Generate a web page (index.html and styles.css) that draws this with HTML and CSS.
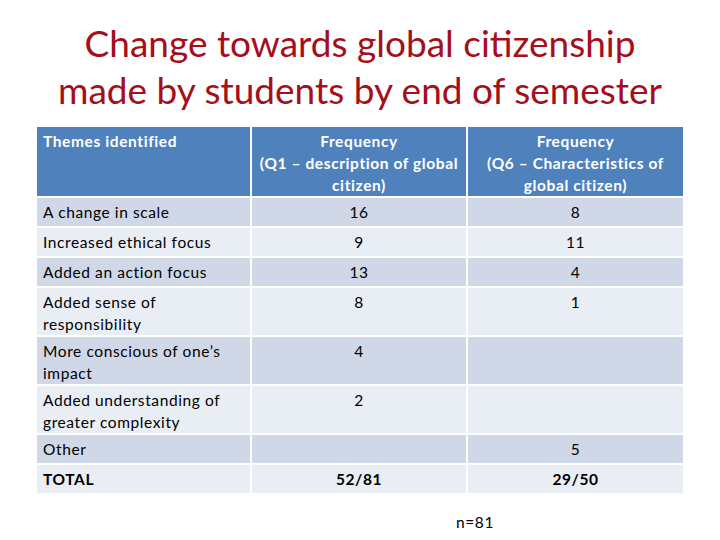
FILE: index.html
```html
<!DOCTYPE html>
<html>
<head>
<meta charset="utf-8">
<link rel="stylesheet" href="styles.css">
</head>
<body>
<div class="slide">
  <h1 class="title">Change towards global citizenship<br>made by students by end of semester</h1>
  <table class="data">
    <colgroup><col class="c1"><col class="c2"><col class="c3"></colgroup>
    <thead>
      <tr>
        <th class="left">Themes identified</th>
        <th>Frequency<br>(Q1 – description of global citizen)</th>
        <th>Frequency<br>(Q6 – Characteristics of global citizen)</th>
      </tr>
    </thead>
    <tbody>
      <tr class="dark"><td class="left">A change in scale</td><td>16</td><td>8</td></tr>
      <tr class="light"><td class="left">Increased ethical focus</td><td>9</td><td>11</td></tr>
      <tr class="dark"><td class="left">Added an action focus</td><td>13</td><td>4</td></tr>
      <tr class="light"><td class="left">Added sense of responsibility</td><td>8</td><td>1</td></tr>
      <tr class="dark"><td class="left">More conscious of one’s impact</td><td>4</td><td></td></tr>
      <tr class="light"><td class="left">Added understanding of greater complexity</td><td>2</td><td></td></tr>
      <tr class="dark"><td class="left">Other</td><td></td><td>5</td></tr>
      <tr class="light total"><td class="left">TOTAL</td><td>52/81</td><td>29/50</td></tr>
    </tbody>
  </table>
  <div class="note">n=81</div>
</div>
</body>
</html>
```
FILE: styles.css
```css
html, body {
  margin: 0;
  padding: 0;
  background: #ffffff;
}
.slide {
  width: 720px;
  height: 540px;
  display: flex;
  flex-direction: column;
  align-items: center;
  font-family: Lato, "Open Sans", sans-serif;
}
.title {
  margin: 19px 0 0 0;
  font-weight: 400;
  font-size: 37px;
  line-height: 47px;
  color: #a50e1a;
  text-align: center;
}
.data {
  margin-top: 12px;
  width: 650px;
  border-collapse: separate;
  border-spacing: 2px;
  font-size: 15.5px;
  letter-spacing: 0.6px;
  color: #000;
}
.c1 { width: 213px; }
.c2 { width: 214px; }
.c3 { width: 215px; }
.data tbody tr { height: 28px; }
.data th, .data td {
  padding: 3px 6px 0 6px;
  line-height: 22px;
  vertical-align: top;
  text-align: center;
}
.data th {
  background: #4f81bd;
  color: #ffffff;
  font-weight: 700;
}
.data .left { text-align: left; }
.dark td { background: #d0d8e8; }
.light td { background: #e9edf4; }
.total td { font-weight: 700; }
.note {
  margin-top: 18px;
  margin-left: 230px;
  font-size: 15.5px;
  letter-spacing: 0.6px;
}
```
